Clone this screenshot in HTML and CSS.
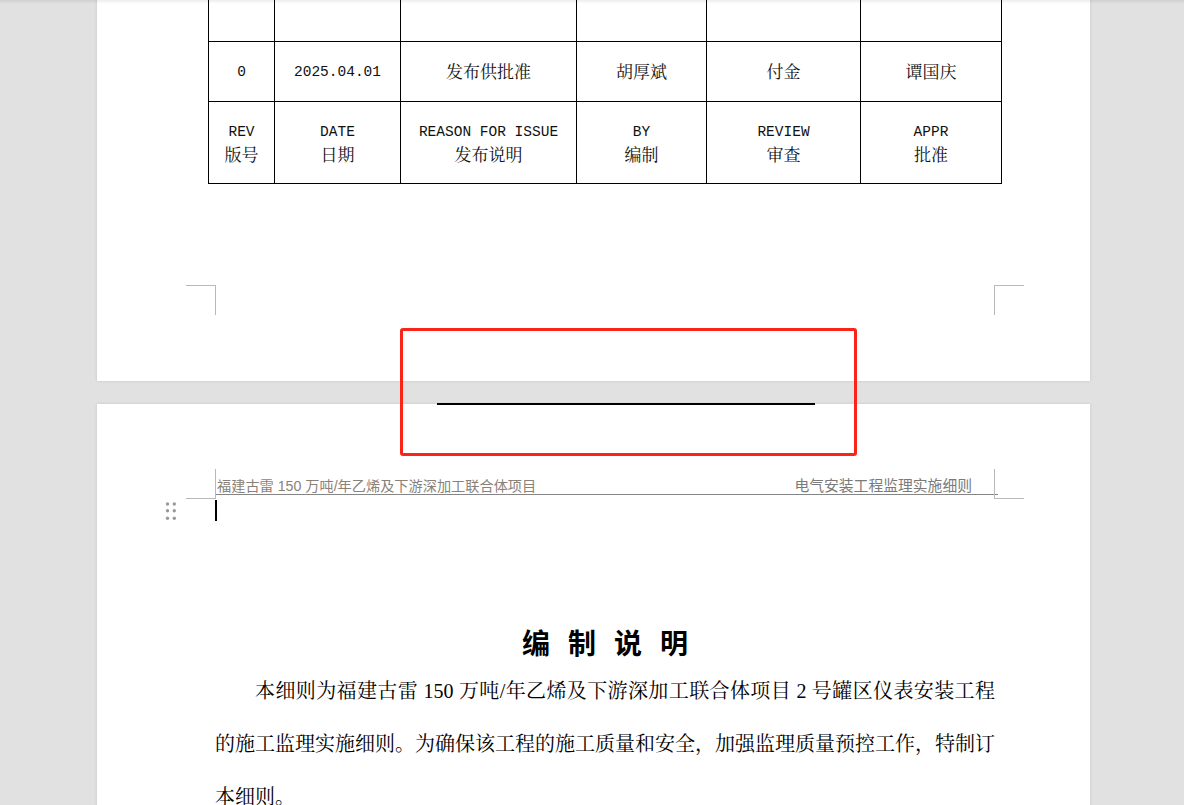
FILE: index.html
```html
<!DOCTYPE html>
<html lang="zh-CN">
<head>
  <meta charset="UTF-8">
  <meta name="viewport" content="width=device-width, initial-scale=1.0">
  <title>电气安装工程监理实施细则</title>
  <link rel="stylesheet" href="styles.css">
</head>
<body>
  <div class="top-shade"></div>
  <div id="desk">
    <section class="page page-first">
      <table class="rev-table">
        <colgroup>
          <col class="c-rev"><col class="c-date"><col class="c-reason">
          <col class="c-by"><col class="c-review"><col class="c-appr">
        </colgroup>
        <tr class="row-blank">
          <td></td><td></td><td></td><td></td><td></td><td></td>
        </tr>
        <tr class="row-data">
          <td><span class="lat">0</span></td>
          <td><span class="lat">2025.04.01</span></td>
          <td>发布供批准</td>
          <td>胡厚斌</td>
          <td>付金</td>
          <td>谭国庆</td>
        </tr>
        <tr class="row-head">
          <td><span class="lat">REV</span><br>版号</td>
          <td><span class="lat">DATE</span><br>日期</td>
          <td><span class="lat">REASON FOR ISSUE</span><br>发布说明</td>
          <td><span class="lat">BY</span><br>编制</td>
          <td><span class="lat">REVIEW</span><br>审查</td>
          <td><span class="lat">APPR</span><br>批准</td>
        </tr>
      </table>
      <i class="mark mark-bl"></i>
      <i class="mark mark-br"></i>
    </section>

    <section class="page page-second">
      <i class="mark mark-tl"></i>
      <i class="mark mark-tr"></i>
      <header class="doc-head">
        <span class="head-left">福建古雷 150 万吨/年乙烯及下游深加工联合体项目</span>
        <span class="head-right">电气安装工程监理实施细则</span>
      </header>
      <div class="blank-para">
        <svg class="grip" width="12" height="20" viewBox="0 0 12 20">
          <circle cx="2.5" cy="3" r="1.7"/><circle cx="9.3" cy="3" r="1.7"/>
          <circle cx="2.5" cy="9.8" r="1.7"/><circle cx="9.3" cy="9.8" r="1.7"/>
          <circle cx="2.5" cy="17.3" r="1.7"/><circle cx="9.3" cy="17.3" r="1.7"/>
        </svg>
        <span class="caret"></span>
      </div>
      <h1 class="doc-title">编制说明</h1>
      <p class="body-text">
        <span class="line first">本细则为福建古雷 150 万吨/年乙烯及下游深加工联合体项目 2 号罐区仪表安装工程</span>
        <span class="line">的施工监理实施细则。为确保该工程的施工质量和安全，加强监理质量预控工作，特制订</span>
        <span class="line last">本细则。</span>
      </p>
    </section>
  </div>

  <div class="annot">
    <div class="break-line"></div>
  </div>
</body>
</html>
```

FILE: styles.css
```css
html, body {
  margin: 0;
  height: 100%;
  overflow: hidden;
  background-color: #e1e1e1;
}

body {
  position: relative;
  font-family: "Liberation Serif", "Noto Serif CJK SC", "Noto Sans CJK SC", serif;
  color: #000;
}

.top-shade {
  position: fixed;
  top: 0;
  left: 0;
  right: 0;
  height: 4px;
  background: linear-gradient(rgba(0, 0, 0, 0.07), rgba(0, 0, 0, 0));
  z-index: 5;
}

#desk {
  display: flex;
  flex-direction: column;
  gap: 23px;
  width: 993px;
  margin-left: 97px;
  padding-top: 1px;
  margin-top: -61px;
}

.page {
  position: relative;
  background-color: #fff;
  box-shadow: 0 0 3px rgba(0, 0, 0, 0.12);
}

/* page margin corner marks */
.mark {
  position: absolute;
  width: 29px;
  height: 29px;
  border: 0 solid #b9b9b9;
}
.mark-bl { left: 89px; bottom: 66px; border-top-width: 1px; border-right-width: 1px; }
.mark-br { right: 66px; bottom: 66px; border-top-width: 1px; border-left-width: 1px; }
.mark-tl { left: 89px; top: 65px; border-bottom-width: 1px; border-right-width: 1px; }
.mark-tr { right: 66px; top: 65px; border-bottom-width: 1px; border-left-width: 1px; }

/* first page: revision table */
.page-first {
  height: 441px;
  box-sizing: border-box;
  padding: 41px 0 0 111px;
}

.rev-table {
  border-collapse: collapse;
  table-layout: fixed;
  width: 793px;
  font-family: "Noto Serif CJK SC", "Noto Sans CJK SC", serif;
  font-size: 17px;
  line-height: 22px;
  color: #111;
}
.rev-table td {
  border: 1px solid #000;
  text-align: center;
  vertical-align: middle;
  padding: 0 0 2px;
}
.rev-table .lat {
  font-family: "Liberation Mono", monospace;
  font-size: 14.5px;
}

.c-rev { width: 66px; }
.c-date { width: 126px; }
.c-reason { width: 176px; }
.c-by { width: 130px; }
.c-review { width: 154px; }
.c-appr { width: 141px; }

.row-blank td, .row-data td { height: 57px; }
.row-head td { height: 79px; }

/* second page */
.page-second {
  min-height: 600px;
  padding: 65px 95px 0 118px;
}

.doc-head {
  display: flex;
  justify-content: space-between;
  align-items: flex-end;
  height: 26px;
  box-sizing: border-box;
  margin-right: -3px;
  padding: 0 26px 0 2px;
  border-bottom: 1px solid #858585;
  font-family: "Liberation Sans", "Noto Sans CJK SC", sans-serif;
  line-height: 16px;
}
.head-left {
  font-size: 14.2px;
  color: #8a8278;
}
.head-right {
  font-size: 14.8px;
  color: #7a7a7a;
}

.blank-para {
  position: relative;
  height: 21px;
  margin-top: 5px;
}
.caret {
  display: block;
  width: 2px;
  height: 21px;
  background-color: #000;
}
.grip {
  position: absolute;
  left: -50px;
  top: 1px;
  fill: #9a9a9a;
}

.doc-title {
  margin: 101px 0 0;
  padding-left: 18px;
  text-align: center;
  font-family: "Noto Sans CJK SC", sans-serif;
  font-size: 28px;
  font-weight: 700;
  line-height: 40px;
  letter-spacing: 18px;
}

.body-text {
  margin: 3px 0 0;
  font-size: 20px;
  line-height: 53px;
}
.body-text .line {
  display: block;
  text-align: justify;
  text-align-last: justify;
}
.body-text .first { text-indent: 40px; }
.body-text .last { text-align-last: left; }

/* overlay annotation */
.annot {
  position: absolute;
  left: 400px;
  top: 328px;
  width: 451px;
  height: 122px;
  border: 3px solid #fb2418;
  border-radius: 3px;
  z-index: 4;
}
.break-line {
  position: absolute;
  left: 34px;
  top: 72px;
  width: 378px;
  height: 2px;
  background-color: #000;
}
```
